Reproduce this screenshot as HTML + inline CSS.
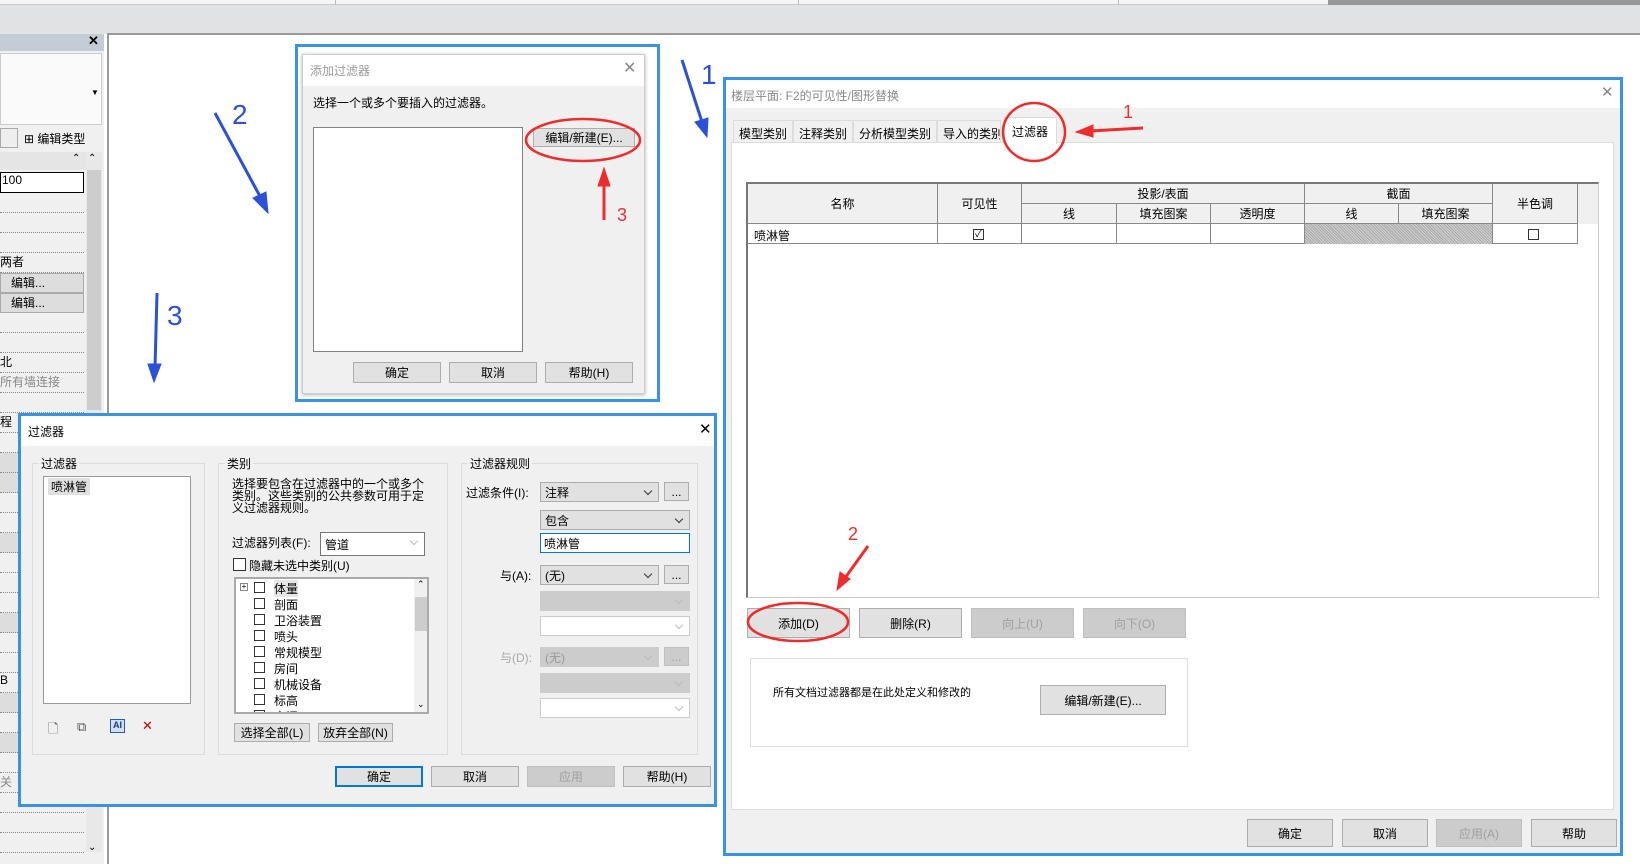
<!DOCTYPE html>
<html><head><meta charset="utf-8">
<style>
*{box-sizing:border-box;margin:0;padding:0}
body{width:1640px;height:864px;overflow:hidden;background:#fff;position:relative;font-family:"Liberation Sans","Noto Sans CJK SC",sans-serif;font-size:12px;color:#000}
.a{position:absolute}
.btn{position:absolute;background:#e1e1e1;border:1px solid #adadad;text-align:center;font-size:12px;display:flex;align-items:center;justify-content:center}
.dis{color:#a0a0a0;background:#cccccc;border-color:#bfbfbf}
.cb{position:absolute;background:#e1e1e1;border:1px solid #adadad;padding-left:4px;display:flex;align-items:center}
.cb:after{content:"";position:absolute;right:7px;top:5px;width:5px;height:5px;border-right:1px solid #333;border-bottom:1px solid #333;transform:rotate(45deg)}
.cb.d{background:#ccc;border-color:#ccc;color:#999}
.cb.d:after{border-color:#bbb}
.cb.w{background:#fff;border-color:#ccc}
.cb.w:after{border-color:#bbb}
.grp{position:absolute;border:1px solid #dcdcdc}
.grp>span{position:absolute;top:-9px;left:6px;background:#f0f0f0;padding:0 2px}
.row{position:absolute;left:0;width:84px;border-bottom:1px dotted #888;height:20px}
.chk{position:absolute;width:11px;height:11px;border:1px solid #333;background:#fff}
.th{position:absolute;border-right:1px solid #888;border-bottom:1px solid #888;display:flex;align-items:center;justify-content:center;font-size:12px}
</style></head><body>
<!-- top strip -->
<div class="a" style="left:0;top:0;width:1640px;height:5px;background:#f5f5f5;border-bottom:1px solid #ccc"></div>
<div class="a" style="left:335px;top:0;width:1px;height:5px;background:#bbb"></div>
<div class="a" style="left:798px;top:0;width:1px;height:5px;background:#bbb"></div>
<div class="a" style="left:1118px;top:0;width:1px;height:5px;background:#bbb"></div>
<div class="a" style="left:1328px;top:0;width:312px;height:5px;background:#999"></div>
<div class="a" style="left:0;top:5px;width:1640px;height:29px;background:#e1e2e4"></div>
<div class="a" style="left:107px;top:33px;width:1533px;height:831px;background:#fff;border-left:2px solid #999;border-top:2px solid #999"></div>
<!-- left panel -->
<div class="a" style="left:0;top:34px;width:104px;height:830px;background:#f0f0f0"></div>
<div class="a" style="left:0;top:34px;width:104px;height:17px;background:#c4ccd6"></div>
<div class="a" style="left:88px;top:33px;font-size:13px;font-weight:bold">✕</div>
<div class="a" style="left:0;top:53px;width:102px;height:72px;background:#fafafa;border:1px solid #ccc"></div>
<div class="a" style="left:91px;top:88px;font-size:8px">▼</div>
<div class="a" style="left:0;top:128px;width:18px;height:20px;border:1px solid #aaa;background:#eee"></div>
<div class="a" style="left:24px;top:130px;font-size:12px">⊞ 编辑类型</div>
<div class="a" style="left:0;top:152px;width:86px;height:18px;background:#e5e5e5"></div>
<div class="a" style="left:72px;top:153px;font-size:10px">⌃</div>
<div class="a" style="left:86px;top:152px;width:16px;height:700px;background:#e8e8e8"></div>
<div class="a" style="left:87px;top:170px;width:14px;height:240px;background:#cdcdcd"></div>
<div class="a" style="left:88px;top:153px;font-size:10px">⌃</div>
<div class="a" style="left:0;top:172px;width:84px;height:21px;background:#fff;border:1px solid #000;padding-left:1px">100</div>
<div class="row" style="top:193px"></div><div class="row" style="top:213px"></div><div class="row" style="top:233px"></div>
<div class="row" style="top:253px">两者</div>
<div class="row" style="top:273px;background:#ddd;border:1px solid #aaa;padding-left:10px">编辑...</div>
<div class="row" style="top:293px;background:#ddd;border:1px solid #aaa;padding-left:10px">编辑...</div>
<div class="row" style="top:313px"></div><div class="row" style="top:333px"></div>
<div class="row" style="top:353px">北</div>
<div class="row" style="top:373px;color:#888">所有墙连接</div>
<div class="row" style="top:393px"></div>
<div class="row" style="top:413px">程</div>
<div class="row" style="top:433px"></div><div class="row" style="top:453px;background:#ddd"></div><div class="row" style="top:473px;background:#ddd"></div>
<div class="row" style="top:493px"></div><div class="row" style="top:513px"></div><div class="row" style="top:533px;background:#ddd"></div>
<div class="row" style="top:553px"></div><div class="row" style="top:573px"></div><div class="row" style="top:593px"></div>
<div class="row" style="top:613px;background:#ddd"></div><div class="row" style="top:633px"></div><div class="row" style="top:653px"></div>
<div class="row" style="top:673px">B</div><div class="row" style="top:693px;background:#ddd"></div><div class="row" style="top:713px"></div>
<div class="row" style="top:733px;background:#ddd"></div><div class="row" style="top:753px"></div>
<div class="row" style="top:773px;color:#888">关</div>
<div class="row" style="top:793px"></div><div class="row" style="top:813px"></div><div class="row" style="top:833px"></div>
<div class="a" style="left:88px;top:842px;font-size:10px">⌄</div>

<!-- Add filter dialog -->
<div class="a" style="left:295px;top:44px;width:365px;height:358px;border:3px solid #3b92e3;background:#fff"></div>
<div class="a" style="left:302px;top:54px;width:343px;height:340px;background:#f0f0f0;border:1px solid #ccc;box-shadow:0 1px 4px rgba(0,0,0,.3)"></div>
<div class="a" style="left:303px;top:55px;width:341px;height:31px;background:#fff"></div>
<div class="a" style="left:310px;top:62px;color:#999;font-size:12px">添加过滤器</div>
<div class="a" style="left:623px;top:58px;color:#888;font-size:16px">✕</div>
<div class="a" style="left:313px;top:94px;font-size:12px">选择一个或多个要插入的过滤器。</div>
<div class="a" style="left:313px;top:127px;width:210px;height:225px;background:#fff;border:1px solid #828282"></div>
<div class="btn" style="left:533px;top:128px;width:102px;height:19px">编辑/新建(E)...</div>
<div class="btn" style="left:353px;top:362px;width:88px;height:21px">确定</div>
<div class="btn" style="left:449px;top:362px;width:88px;height:21px">取消</div>
<div class="btn" style="left:545px;top:362px;width:88px;height:21px">帮助(H)</div>

<!-- Visibility dialog -->
<div class="a" style="left:723px;top:77px;width:900px;height:779px;border:3px solid #3b92e3;background:#f0f0f0"></div>
<div class="a" style="left:726px;top:80px;width:894px;height:28px;background:#fff"></div>
<div class="a" style="left:731px;top:87px;color:#888">楼层平面: F2的可见性/图形替换</div>
<div class="a" style="left:1601px;top:83px;color:#888;font-size:15px">✕</div>
<div class="a" style="left:731px;top:142px;width:883px;height:668px;background:#fff;border:1px solid #dcdcdc"></div>
<div class="a" style="left:733px;top:120px;width:60px;height:23px;border:1px solid #dcdcdc;background:#f0f0f0;padding:4px 0 0 5px">模型类别</div>
<div class="a" style="left:793px;top:120px;width:60px;height:23px;border:1px solid #dcdcdc;background:#f0f0f0;padding:4px 0 0 5px">注释类别</div>
<div class="a" style="left:853px;top:120px;width:84px;height:23px;border:1px solid #dcdcdc;background:#f0f0f0;padding:4px 0 0 5px">分析模型类别</div>
<div class="a" style="left:937px;top:120px;width:64px;height:23px;border:1px solid #dcdcdc;background:#f0f0f0;padding:4px 0 0 5px;overflow:hidden;white-space:nowrap">导入的类别</div>
<div class="a" style="left:1004px;top:117px;width:53px;height:27px;border:1px solid #dcdcdc;border-bottom:none;background:#fff;padding:5px 0 0 7px">过滤器</div>
<!-- table -->
<div class="a" style="left:746px;top:182px;width:853px;height:416px;background:#fff;border:2px solid #777;border-right:1px solid #ccc;border-bottom:1px solid #ccc"></div>
<div class="a" style="left:748px;top:184px;width:850px;height:40px;background:#f0f0f0"></div>
<div class="th" style="left:748px;top:184px;width:190px;height:40px">名称</div>
<div class="th" style="left:938px;top:184px;width:84px;height:40px">可见性</div>
<div class="th" style="left:1022px;top:184px;width:283px;height:20px">投影/表面</div>
<div class="th" style="left:1022px;top:204px;width:95px;height:20px">线</div>
<div class="th" style="left:1117px;top:204px;width:94px;height:20px">填充图案</div>
<div class="th" style="left:1211px;top:204px;width:94px;height:20px">透明度</div>
<div class="th" style="left:1305px;top:184px;width:188px;height:20px">截面</div>
<div class="th" style="left:1305px;top:204px;width:94px;height:20px">线</div>
<div class="th" style="left:1399px;top:204px;width:94px;height:20px">填充图案</div>
<div class="th" style="left:1493px;top:184px;width:85px;height:40px">半色调</div>
<div class="a" style="left:748px;top:224px;width:830px;height:20px;border-bottom:1px solid #888"></div>
<div class="a" style="left:748px;top:224px;width:190px;height:20px;border-right:1px solid #888;padding:3px 0 0 6px">喷淋管</div>
<div class="a" style="left:938px;top:224px;width:84px;height:20px;border-right:1px solid #888"></div>
<div class="chk" style="left:973px;top:229px;font-size:10px;line-height:9px;text-align:center">✓</div>
<div class="a" style="left:1022px;top:224px;width:95px;height:20px;border-right:1px solid #888"></div>
<div class="a" style="left:1117px;top:224px;width:94px;height:20px;border-right:1px solid #888"></div>
<div class="a" style="left:1211px;top:224px;width:94px;height:20px;border-right:1px solid #888"></div>
<div class="a" style="left:1305px;top:224px;width:188px;height:20px;background:repeating-linear-gradient(45deg,#aaa 0 1px,#d0d0d0 1px 2px);border-right:1px solid #888"></div>
<div class="a" style="left:1493px;top:224px;width:85px;height:20px;border-right:1px solid #888"></div>
<div class="chk" style="left:1528px;top:229px"></div>
<div class="btn" style="left:747px;top:608px;width:103px;height:30px">添加(D)</div>
<div class="btn" style="left:859px;top:608px;width:103px;height:30px">删除(R)</div>
<div class="btn dis" style="left:971px;top:608px;width:103px;height:30px">向上(U)</div>
<div class="btn dis" style="left:1083px;top:608px;width:103px;height:30px">向下(O)</div>
<div class="a" style="left:750px;top:658px;width:438px;height:89px;border:1px solid #dcdcdc;background:#fff"></div>
<div class="a" style="left:773px;top:684px;font-size:11px">所有文档过滤器都是在此处定义和修改的</div>
<div class="btn" style="left:1040px;top:685px;width:126px;height:30px">编辑/新建(E)...</div>
<div class="btn" style="left:1247px;top:819px;width:86px;height:28px">确定</div>
<div class="btn" style="left:1342px;top:819px;width:86px;height:28px">取消</div>
<div class="btn dis" style="left:1436px;top:819px;width:86px;height:28px">应用(A)</div>
<div class="btn" style="left:1531px;top:819px;width:86px;height:28px">帮助</div>

<!-- Filter dialog -->
<div class="a" style="left:18px;top:413px;width:699px;height:394px;border:3px solid #3b92e3;background:#f0f0f0"></div>
<div class="a" style="left:21px;top:416px;width:693px;height:30px;background:#fff"></div>
<div class="a" style="left:28px;top:423px">过滤器</div>
<div class="a" style="left:699px;top:420px;font-size:15px">✕</div>
<div class="grp" style="left:32px;top:463px;width:173px;height:292px"><span>过滤器</span></div>
<div class="a" style="left:43px;top:476px;width:148px;height:228px;background:#fff;border:1px solid #999"></div>
<div class="a" style="left:48px;top:478px;background:#e0e0e0;padding:0 3px">喷淋管</div>
<div class="a" style="left:48px;top:720px;font-size:13px;color:#555">🗋</div>
<div class="a" style="left:77px;top:719px;font-size:13px;color:#555">⧉</div>
<div class="a" style="left:110px;top:719px;width:15px;height:14px;border:1px solid #2a5caa;background:#cfe0f5;font-size:9px;color:#1a3e88;font-weight:bold;text-align:center">AI</div>
<div class="a" style="left:142px;top:718px;font-size:13px;color:#c00">✕</div>
<div class="grp" style="left:218px;top:463px;width:230px;height:292px"><span>类别</span></div>
<div class="a" style="left:232px;top:478px;width:200px;font-size:12px;line-height:12px">选择要包含在过滤器中的一个或多个类别。这些类别的公共参数可用于定义过滤器规则。</div>
<div class="a" style="left:232px;top:534px">过滤器列表(F):</div>
<div class="cb w" style="left:320px;top:532px;width:105px;height:24px;border-color:#777">管道</div>
<div class="chk" style="left:233px;top:558px;width:13px;height:13px"></div>
<div class="a" style="left:249px;top:557px">隐藏未选中类别(U)</div>
<div class="a" style="left:234px;top:577px;width:195px;height:137px;background:#fff;border:2px solid #aaa;overflow:hidden">
<div class="a" style="left:178px;top:0;width:15px;height:135px;background:#f0f0f0"></div>
<div class="a" style="left:179px;top:18px;width:13px;height:34px;background:#cdcdcd"></div>
<div class="a" style="left:181px;top:0;font-size:9px">⌃</div>
<div class="a" style="left:181px;top:120px;font-size:9px">⌄</div>
<div class="a" style="left:4px;top:4px;width:8px;height:8px;border:1px solid #888;font-size:8px;line-height:6px;text-align:center">+</div>
<div class="chk" style="left:18px;top:3px"></div><div class="a" style="left:38px;top:1px;background:#e6e6e6">体量</div>
<div class="chk" style="left:18px;top:19px"></div><div class="a" style="left:38px;top:17px">剖面</div>
<div class="chk" style="left:18px;top:35px"></div><div class="a" style="left:38px;top:33px">卫浴装置</div>
<div class="chk" style="left:18px;top:51px"></div><div class="a" style="left:38px;top:49px">喷头</div>
<div class="chk" style="left:18px;top:67px"></div><div class="a" style="left:38px;top:65px">常规模型</div>
<div class="chk" style="left:18px;top:83px"></div><div class="a" style="left:38px;top:81px">房间</div>
<div class="chk" style="left:18px;top:99px"></div><div class="a" style="left:38px;top:97px">机械设备</div>
<div class="chk" style="left:18px;top:115px"></div><div class="a" style="left:38px;top:113px">标高</div>
<div class="chk" style="left:18px;top:131px"></div><div class="a" style="left:38px;top:129px">空间</div>
</div>
<div class="btn" style="left:234px;top:723px;width:76px;height:19px">选择全部(L)</div>
<div class="btn" style="left:318px;top:723px;width:75px;height:19px">放弃全部(N)</div>
<div class="grp" style="left:461px;top:463px;width:237px;height:292px"><span>过滤器规则</span></div>
<div class="a" style="left:466px;top:484px">过滤条件(I):</div>
<div class="cb" style="left:540px;top:482px;width:119px;height:20px">注释</div>
<div class="btn" style="left:664px;top:482px;width:25px;height:19px">...</div>
<div class="cb" style="left:540px;top:510px;width:150px;height:20px">包含</div>
<div class="a" style="left:540px;top:533px;width:150px;height:20px;background:#fff;border:1px solid #0078d7;padding:1px 3px">喷淋管</div>
<div class="a" style="left:500px;top:567px">与(A):</div>
<div class="cb" style="left:540px;top:565px;width:119px;height:20px">(无)</div>
<div class="btn" style="left:664px;top:565px;width:25px;height:19px">...</div>
<div class="cb d" style="left:540px;top:591px;width:150px;height:20px"></div>
<div class="cb w" style="left:540px;top:616px;width:150px;height:20px"></div>
<div class="a" style="left:500px;top:649px;color:#aaa">与(D):</div>
<div class="cb d" style="left:540px;top:647px;width:119px;height:20px">(无)</div>
<div class="btn dis" style="left:664px;top:647px;width:25px;height:19px">...</div>
<div class="cb d" style="left:540px;top:673px;width:150px;height:20px"></div>
<div class="cb w" style="left:540px;top:698px;width:150px;height:20px"></div>
<div class="btn" style="left:335px;top:766px;width:88px;height:21px;border:2px solid #0078d7">确定</div>
<div class="btn" style="left:431px;top:766px;width:88px;height:21px">取消</div>
<div class="btn dis" style="left:527px;top:766px;width:88px;height:21px">应用</div>
<div class="btn" style="left:623px;top:766px;width:88px;height:21px">帮助(H)</div>

<!-- annotations -->
<svg class="a" style="left:0;top:0" width="1640" height="864">
<g fill="#2c50d8" stroke="#2c50d8">
<line x1="215" y1="113" x2="262" y2="200" stroke-width="3"/><polygon points="268,213 253,198 266,192" />
<line x1="157" y1="293" x2="155" y2="368" stroke-width="3"/><polygon points="154,382 148,364 161,364"/>
<line x1="682" y1="60" x2="702" y2="122" stroke-width="3"/><polygon points="707,137 695,122 708,118"/>
</g>
<g fill="#2c50d8" font-family="Liberation Sans" font-size="28">
<text x="232" y="124">2</text><text x="167" y="325">3</text><text x="701" y="84">1</text>
</g>
<g fill="none" stroke="#ee2c2c" stroke-width="2.5">
<ellipse cx="583" cy="140" rx="57" ry="21"/>
<ellipse cx="1034" cy="132" rx="31" ry="29"/>
<ellipse cx="798" cy="622" rx="50" ry="19"/>
</g>
<g fill="#ee2c2c" stroke="#ee2c2c">
<line x1="604" y1="220" x2="604" y2="182" stroke-width="3"/><polygon points="604,168 598,186 610,186"/>
<line x1="1143" y1="128" x2="1090" y2="131" stroke-width="3"/><polygon points="1076,132 1093,125 1093,137"/>
<line x1="868" y1="546" x2="845" y2="578" stroke-width="3"/><polygon points="837,590 840,572 850,579"/>
</g>
<g fill="#ee2c2c" font-family="Liberation Sans" font-size="18">
<text x="617" y="221">3</text><text x="1123" y="118">1</text><text x="848" y="540">2</text>
</g>
</svg>
</body></html>
